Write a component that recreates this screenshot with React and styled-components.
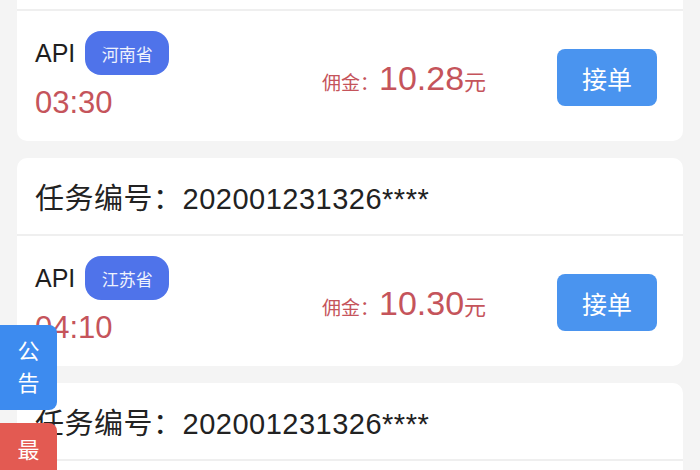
import React from "react";
import styled, { createGlobalStyle } from "styled-components";

const GlobalStyle = createGlobalStyle`
  html, body {
    margin: 0;
    padding: 0;
    background: #f4f4f4;
    overflow: hidden;
  }
  body {
    font-family: "Liberation Sans", "Noto Sans CJK SC", sans-serif;
    color: #222;
  }
`;

const Page = styled.div`
  display: flex;
  flex-direction: column;
  gap: 17px;
  padding: 0 17px;
  margin-top: -67px;
`;

const Card = styled.div`
  background: #fff;
  border-radius: 10px;
  overflow: hidden;
`;

const CardHeader = styled.div`
  height: 76px;
  display: flex;
  align-items: center;
  padding: 0 18px;
  font-size: 29px;
  letter-spacing: 0.5px;
  color: #222;
  border-bottom: 2px solid #efefef;
`;

const CardBody = styled.div`
  height: 130px;
  display: flex;
  align-items: center;
  padding: 0 26px 0 18px;
`;

const Info = styled.div`
  align-self: flex-start;
  width: 287px;
  padding-top: 20px;
  display: flex;
  flex-direction: column;
`;

const TitleRow = styled.div`
  height: 44px;
  display: flex;
  align-items: center;
  gap: 10px;
`;

const Api = styled.span`
  font-size: 25px;
  color: #1e1e1e;
`;

const Badge = styled.span`
  width: 84px;
  height: 44px;
  border-radius: 16px;
  background: #4f73ea;
  color: #eef2fd;
  font-size: 17px;
  display: flex;
  align-items: center;
  justify-content: center;
`;

const Time = styled.div`
  margin-top: 8px;
  font-size: 31px;
  line-height: 40px;
  color: #c5545b;
`;

const Commission = styled.div`
  flex: 1;
  display: flex;
  align-items: baseline;
  color: #c5545b;
  padding-top: 4px;
`;

const Label = styled.span`
  font-size: 19px;
`;

const Amount = styled.span`
  font-size: 34px;
`;

const Unit = styled.span`
  font-size: 22px;
`;

const AcceptButton = styled.button`
  width: 100px;
  height: 57px;
  border: none;
  border-radius: 8px;
  background: #4a94ef;
  color: #fff;
  font-family: inherit;
  font-size: 25px;
  padding: 0;
  margin-top: 3px;
`;

const SideTab = styled.div`
  position: fixed;
  left: 0;
  top: ${(p) => p.$top}px;
  width: 57px;
  height: 85px;
  background: ${(p) => p.$color};
  border-radius: 0 8px 8px 0;
  color: #fff;
  font-size: 22px;
  line-height: 32px;
  display: flex;
  flex-direction: column;
  align-items: center;
  padding-top: ${(p) => p.$pad}px;
  box-sizing: border-box;
`;

const orders = [
  { id: "202001231326****", province: "河南省", time: "03:30", amount: "10.28" },
  { id: "202001231326****", province: "江苏省", time: "04:10", amount: "10.30" },
  { id: "202001231326****", province: "浙江省", time: "05:20", amount: "10.26" },
];

export default function App() {
  return (
    <>
      <GlobalStyle />
      <Page>
        {orders.map((o, i) => (
          <Card key={i}>
            <CardHeader>任务编号：{o.id}</CardHeader>
            <CardBody>
              <Info>
                <TitleRow>
                  <Api>API</Api>
                  <Badge>{o.province}</Badge>
                </TitleRow>
                <Time>{o.time}</Time>
              </Info>
              <Commission>
                <Label>佣金：</Label>
                <Amount>{o.amount}</Amount>
                <Unit>元</Unit>
              </Commission>
              <AcceptButton>接单</AcceptButton>
            </CardBody>
          </Card>
        ))}
      </Page>
      <SideTab $top={325} $color="#3d8bef" $pad={11}>
        <span>公</span>
        <span>告</span>
      </SideTab>
      <SideTab $top={423} $color="#e35a52" $pad={12}>
        <span>最</span>
        <span>新</span>
      </SideTab>
    </>
  );
}
